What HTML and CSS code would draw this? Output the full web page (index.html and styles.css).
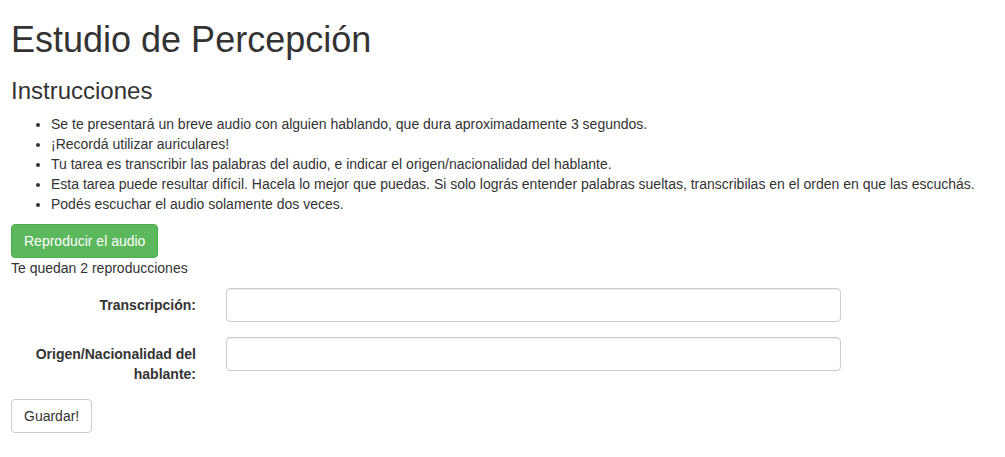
FILE: index.html
```html
<!DOCTYPE html>
<html lang="es">
<head>
<meta charset="utf-8">
<title>Estudio de Percepción</title>
<link rel="stylesheet" href="styles.css">
</head>
<body>
<div class="container">
  <h1 class="title">Estudio de Percepción</h1>
  <h3 class="subtitle">Instrucciones</h3>
  <ul class="instructions">
    <li>Se te presentará un breve audio con alguien hablando, que dura aproximadamente 3 segundos.</li>
    <li>¡Recordá utilizar auriculares!</li>
    <li>Tu tarea es transcribir las palabras del audio, e indicar el origen/nacionalidad del hablante.</li>
    <li>Esta tarea puede resultar difícil. Hacela lo mejor que puedas. Si solo lográs entender palabras sueltas, transcribilas en el orden en que las escuchás.</li>
    <li>Podés escuchar el audio solamente dos veces.</li>
  </ul>
  <button class="btn btn-success" type="button">Reproducir el audio</button>
  <p class="remaining">Te quedan 2 reproducciones</p>
  <form class="form">
    <div class="form-group">
      <label class="control-label" for="transcripcion">Transcripción:</label>
      <input class="form-control" id="transcripcion" type="text">
    </div>
    <div class="form-group">
      <label class="control-label" for="origen">Origen/Nacionalidad del hablante:</label>
      <input class="form-control" id="origen" type="text">
    </div>
    <button class="btn btn-default" type="button">Guardar!</button>
  </form>
</div>
</body>
</html>
```
FILE: styles.css
```css
* { box-sizing: border-box; }
html, body { margin: 0; }
body {
  font-family: "Liberation Sans", Arial, Helvetica, sans-serif;
  font-size: 14px;
  line-height: 1.42857143;
  color: #333;
  background: #fff;
}
.container { padding: 0 11px; }
.title {
  font-size: 36px;
  font-weight: 500;
  line-height: 1.1;
  margin: 20px 0 10px;
}
.subtitle {
  font-size: 24px;
  font-weight: 500;
  line-height: 1.1;
  margin: 18px 0 10px;
}
.instructions {
  margin: 0 0 10px;
  padding-left: 40px;
}
.btn {
  display: inline-block;
  padding: 6px 12px;
  font-family: inherit;
  font-size: 14px;
  line-height: 1.42857143;
  border: 1px solid transparent;
  border-radius: 4px;
  cursor: pointer;
  vertical-align: middle;
}
.btn-success {
  color: #fff;
  background: #5cb85c;
  border-color: #4cae4c;
}
.btn-default {
  color: #333;
  background: #fff;
  border-color: #ccc;
}
.remaining { margin: 0 0 10px; }
.form-group {
  display: grid;
  grid-template-columns: 185px 615px;
  column-gap: 30px;
  margin-bottom: 15px;
  align-items: start;
}
.control-label {
  text-align: right;
  font-weight: bold;
  padding-top: 7px;
}
.form-control {
  display: block;
  width: 100%;
  height: 34px;
  padding: 6px 12px;
  font-family: inherit;
  font-size: 14px;
  color: #555;
  background: #fff;
  border: 1px solid #ccc;
  border-radius: 4px;
  box-shadow: inset 0 1px 1px rgba(0,0,0,.075);
}
```
